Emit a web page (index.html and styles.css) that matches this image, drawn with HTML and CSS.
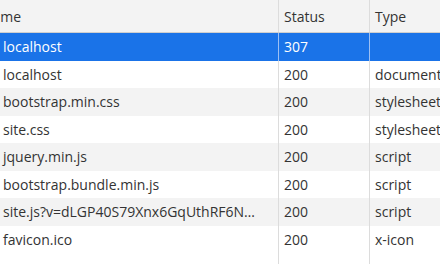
FILE: index.html
```html
<!DOCTYPE html>
<html lang="en">
<head>
    <meta charset="UTF-8">
    <meta name="viewport" content="width=device-width, initial-scale=1.0">
    <title>Network</title>
    <link rel="stylesheet" href="styles.css">
</head>
<body>
    <div class="network-table">
        <div class="row header">
            <div class="cell name-cell head-name">Name</div>
            <div class="cell status-cell">Status</div>
            <div class="cell type-cell">Type</div>
        </div>
        <div class="row selected">
            <div class="cell name-cell">localhost</div>
            <div class="cell status-cell">307</div>
            <div class="cell type-cell"></div>
        </div>
        <div class="row">
            <div class="cell name-cell">localhost</div>
            <div class="cell status-cell">200</div>
            <div class="cell type-cell">document</div>
        </div>
        <div class="row odd">
            <div class="cell name-cell">bootstrap.min.css</div>
            <div class="cell status-cell">200</div>
            <div class="cell type-cell">stylesheet</div>
        </div>
        <div class="row">
            <div class="cell name-cell">site.css</div>
            <div class="cell status-cell">200</div>
            <div class="cell type-cell">stylesheet</div>
        </div>
        <div class="row odd">
            <div class="cell name-cell">jquery.min.js</div>
            <div class="cell status-cell">200</div>
            <div class="cell type-cell">script</div>
        </div>
        <div class="row">
            <div class="cell name-cell">bootstrap.bundle.min.js</div>
            <div class="cell status-cell">200</div>
            <div class="cell type-cell">script</div>
        </div>
        <div class="row odd">
            <div class="cell name-cell">site.js?v=dLGP40S79Xnx6GqUthRF6N…</div>
            <div class="cell status-cell">200</div>
            <div class="cell type-cell">script</div>
        </div>
        <div class="row">
            <div class="cell name-cell">favicon.ico</div>
            <div class="cell status-cell">200</div>
            <div class="cell type-cell">x-icon</div>
        </div>
        <div class="row filler">
            <div class="cell name-cell"></div>
            <div class="cell status-cell"></div>
            <div class="cell type-cell"></div>
        </div>
    </div>
</body>
</html>
```

FILE: styles.css
```css
body, html {
    margin: 0;
    padding: 0;
    height: 100%;
    overflow: hidden;
    background-color: #fff;
    font-family: 'Open Sans', 'Noto Sans', sans-serif;
    font-size: 14px;
    color: #333;
}

.network-table {
    display: flex;
    flex-direction: column;
    height: 100%;
    width: 440px;
}

.row {
    display: grid;
    grid-template-columns: 279px 91px 1fr;
    height: 27.5px;
    flex-shrink: 0;
}

.row.odd {
    background-color: #f3f3f3;
}

.row.header {
    height: 33px;
    background-color: #f3f3f3;
    border-bottom: 1px solid #cfcfcf;
    box-sizing: border-box;
}

.row.selected {
    background-color: #1a73e8;
    color: #fff;
}

.row.filler {
    flex: 1;
}

.cell {
    display: flex;
    align-items: center;
    white-space: nowrap;
    overflow: hidden;
    box-sizing: border-box;
}

.name-cell {
    padding-left: 3px;
    border-right: 1px solid #dcdcdc;
}

.head-name {
    padding-left: 0;
    text-indent: -18px;
}

.status-cell {
    padding-left: 5px;
    border-right: 1px solid #dcdcdc;
}

.type-cell {
    padding-left: 5px;
}

.selected .cell {
    border-right-color: #9dc0f3;
}
```
